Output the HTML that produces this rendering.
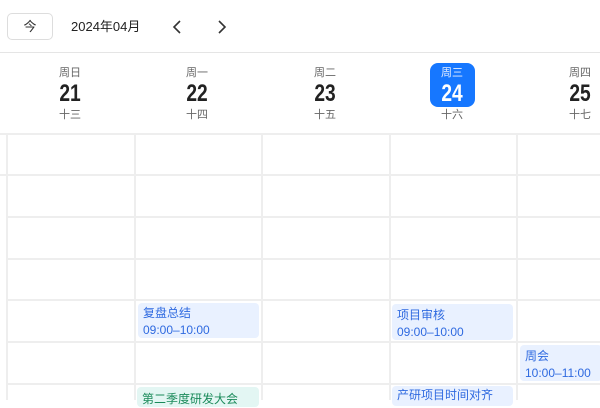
<!DOCTYPE html>
<html><head><meta charset="utf-8"><style>
*{margin:0;padding:0;box-sizing:border-box}
body{width:600px;height:400px;overflow:hidden;background:#fff;font-family:"Liberation Sans","Noto Sans CJK SC",sans-serif;position:relative}
.a{position:absolute}
.vl{position:absolute;top:134px;bottom:0;width:2px;background:#eeeeee}
.hl{position:absolute;left:7px;right:0;height:2px;background:#eeeeee}
.day{position:absolute;top:66px;width:60px;text-align:center}
.wk{font-size:11px;color:#666;line-height:14px}
.num{font-size:24px;font-weight:bold;color:#222;line-height:28px;font-family:"Liberation Sans Narrow","Liberation Sans",sans-serif;transform:scaleX(0.8)}
.lun{font-size:11px;color:#666;line-height:14px}
.ev{position:absolute;background:#e9f1ff;border-radius:4px;color:#2f6ae0;font-size:12px;line-height:17px;padding:2px 5px}
</style></head><body>
<div class="a" style="left:7px;top:13px;width:46px;height:27px;border:1px solid #ddd;border-radius:5px;font-size:13px;text-align:center;line-height:25px;color:#333">今</div>
<div class="a" style="left:71px;top:18px;font-size:13px;color:#222;line-height:17px">2024年04月</div>
<svg class="a" style="left:170px;top:19px" width="14" height="16" viewBox="0 0 14 16"><path d="M10 2L4 8L10 14" fill="none" stroke="#333" stroke-width="1.6"/></svg>
<svg class="a" style="left:215px;top:19px" width="14" height="16" viewBox="0 0 14 16"><path d="M4 2L10 8L4 14" fill="none" stroke="#333" stroke-width="1.6"/></svg>
<div class="a" style="left:0;right:0;top:52px;height:1px;background:#e5e5e5"></div>
<div class="a" style="left:430px;top:63px;width:45px;height:44px;background:#1677ff;border-radius:8px"></div>
<div class="day" style="left:40px"><div class="wk">周日</div><div class="num">21</div><div class="lun">十三</div></div>
<div class="day" style="left:167px"><div class="wk">周一</div><div class="num">22</div><div class="lun">十四</div></div>
<div class="day" style="left:295px"><div class="wk">周二</div><div class="num">23</div><div class="lun">十五</div></div>
<div class="day" style="left:422px"><div class="wk" style="color:#e6efff">周三</div><div class="num" style="color:#fff">24</div><div class="lun">十六</div></div>
<div class="day" style="left:550px"><div class="wk">周四</div><div class="num">25</div><div class="lun">十七</div></div>
<div class="hl" style="top:133px;left:0"></div>
<div class="hl" style="top:174px;left:0"></div>
<div class="hl" style="top:216px"></div>
<div class="hl" style="top:258px"></div>
<div class="hl" style="top:299px"></div>
<div class="hl" style="top:341px"></div>
<div class="hl" style="top:383px"></div>
<div class="vl" style="left:6px"></div>
<div class="vl" style="left:134px"></div>
<div class="vl" style="left:261px"></div>
<div class="vl" style="left:389px"></div>
<div class="vl" style="left:516px"></div>
<div class="ev" style="left:138px;top:303px;width:121px;height:35px">复盘总结<br>09:00–10:00</div>
<div class="ev" style="left:392px;top:304px;width:121px;height:36px;padding-top:3px">项目审核<br>09:00–10:00</div>
<div class="ev" style="left:520px;top:345px;width:82px;height:36px;padding-top:3px">周会<br>10:00–11:00</div>
<div class="ev" style="left:137px;top:387px;width:122px;height:20px;background:#e3f6f3;color:#1a8a5a;padding-top:4px">第二季度研发大会</div>
<div class="ev" style="left:392px;top:386px;width:121px;height:20px;padding-top:1px">产研项目时间对齐</div>
</body></html>
